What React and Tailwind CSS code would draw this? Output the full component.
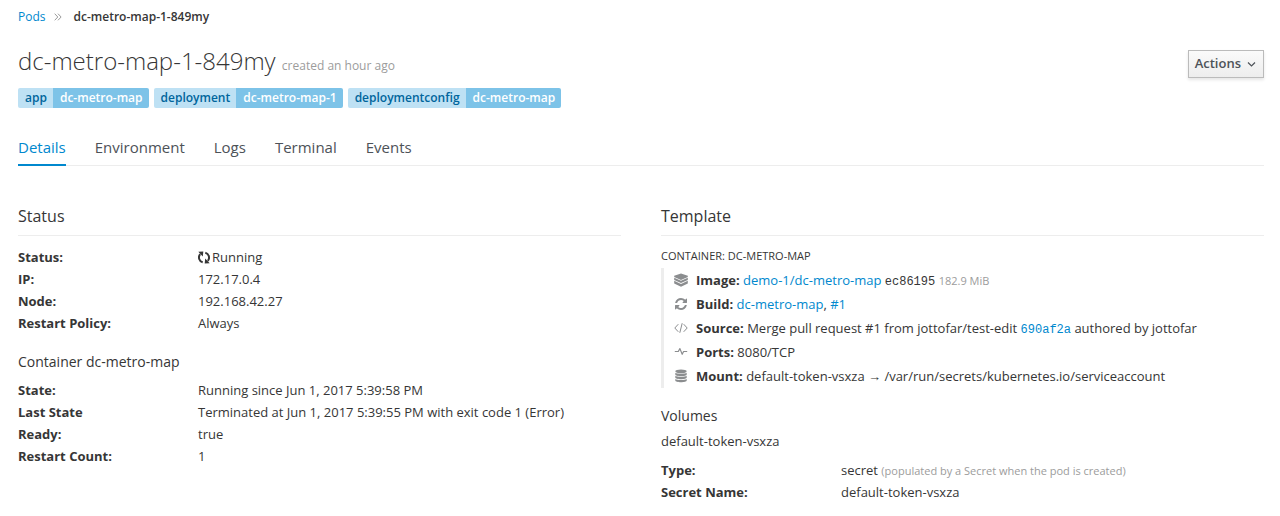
import React from "react";

const link = "text-[#0088ce] hover:underline";
const mono = "font-['Liberation_Mono',monospace] text-xs leading-none";
const muted = "text-[11px] leading-none text-[#9c9c9c]";

function LayersIcon() {
  return (
    <svg viewBox="0 0 14 14" className="h-3.5 w-3.5" fill="currentColor" aria-hidden="true">
      <path d="M7 .5 13.800 2.700V4L7 7 .200 4V2.700z" />
      <path d="M.2 4.800 7 7.800l6.800-3v2.200L7 10.100.2 7z" />
      <path d="M.2 7.800 7 10.900l6.800-3.100v2.700L7 13.700.2 10.500z" />
    </svg>
  );
}

function RefreshIcon() {
  return (
    <svg viewBox="0 0 1536 1536" className="h-3 w-3" fill="currentColor" aria-hidden="true">
      <path d="M1511 928q0 5-1 7-64 268-268 434.500T764 1536q-146 0-282.500-55T238 1324l-129 129q-19 19-45 19t-45-19-19-45V960q0-26 19-45t45-19h448q26 0 45 19t19 45-19 45l-137 137q71 66 161 102t187 36q134 0 250-65t186-179q11-17 53-117 8-23 30-23h192q13 0 22.500 9.500t9.500 22.500zm25-800v448q0 26-19 45t-45 19h-448q-26 0-45-19t-19-45 19-45l138-138Q969 256 768 256q-134 0-250 65T332 500q-11 17-53 117-8 23-30 23H50q-13 0-22.500-9.500T18 608v-7q65-268 270-434.500T768 0q146 0 284 55.500T1297 212l130-129q19-19 45-19t45 19 19 45z" />
    </svg>
  );
}

function CodeIcon() {
  return (
    <svg viewBox="0 0 14 12" className="h-3 w-3.5" fill="none" stroke="currentColor" strokeWidth="1" aria-hidden="true">
      <path d="M4.300 2.200.8 6l3.500 3.800M9.700 2.200 13.200 6 9.700 9.800M8.200 1.200 5.800 10.800" />
    </svg>
  );
}

function PulseIcon() {
  return (
    <svg viewBox="0 0 14 12" className="h-3 w-3.5" fill="none" stroke="currentColor" strokeWidth="1.200" strokeLinejoin="round" aria-hidden="true">
      <path d="M.8 5.500h3.500L5.900 2.600 8.200 8.300 9.600 5.500H13.200" />
    </svg>
  );
}

function DatabaseIcon() {
  return (
    <svg viewBox="0 0 12 14" className="h-3.5 w-3" fill="currentColor" aria-hidden="true">
      <ellipse cx="6" cy="2.300" rx="5.700" ry="1.900" />
      <path d="M.3 3.700c1.800 1.500 9.600 1.500 11.400 0v1.700c0 2.300-11.400 2.300-11.400 0z" />
      <path d="M.3 6.800c1.800 1.500 9.600 1.500 11.400 0v1.700c0 2.300-11.400 2.300-11.400 0z" />
      <path d="M.3 9.900c1.800 1.500 9.600 1.500 11.400 0v1.700c0 2.300-11.400 2.300-11.400 0z" />
    </svg>
  );
}

function RunningIcon() {
  return (
    <svg viewBox="0 0 12 13" className="h-[13px] w-3" aria-hidden="true">
      <path d="M4.700 11.300A5 5 0 0 1 2.200 3.200M7.300 1.700A5 5 0 0 1 9.800 9.800" fill="none" stroke="currentColor" strokeWidth="2" />
      <path d="M.3.800 5.300.500 4.800 5.500zM11.700 12.200 6.700 12.500 7.200 7.500z" fill="currentColor" />
    </svg>
  );
}

function Label({ name, value }) {
  return (
    <li className="flex h-5 overflow-hidden rounded-xs text-xs leading-5 font-semibold">
      <span className="bg-[#bee1f4] pr-1.5 pl-[7px] text-[#00659c]">{name}</span>
      <a href="#label" className="bg-[#7dc3e8] pr-1.5 pl-[7px] text-white">{value}</a>
    </li>
  );
}

function Facts({ items }) {
  return (
    <dl className="grid grid-cols-[180px_1fr] leading-[22px]">
      {items.map(([term, value]) => (
        <React.Fragment key={term}>
          <dt className="font-bold">{term}</dt>
          <dd>{value}</dd>
        </React.Fragment>
      ))}
    </dl>
  );
}

function Row({ icon, name, children }) {
  return (
    <li className="flex">
      <span className="flex w-8 shrink-0 items-center pl-2.5 text-[#8b8d8f]">
        <span className="flex w-3.5 justify-center">{icon}</span>
      </span>
      <span className="min-w-0">
        <b>{name}:</b> {children}
      </span>
    </li>
  );
}

function Heading({ children }) {
  return <h2 className="mb-2.5 border-b border-[#ededed] pb-[7px] text-base leading-6">{children}</h2>;
}

const tabs = ["Details", "Environment", "Logs", "Terminal", "Events"];

export default function App() {
  return (
    <div className="bg-white pt-2 pr-4 pb-3 pl-[18px] font-['Open_Sans',sans-serif] text-[13px] text-[#363636]">
      <nav aria-label="Breadcrumb">
        <ol className="flex items-center text-xs leading-[18px]">
          <li><a href="#pods" className={link}>Pods</a></li>
          <li className="flex items-center">
            <svg viewBox="0 0 8 8" className="mr-3 ml-2 h-2 w-2" fill="none" stroke="#9c9c9c" aria-hidden="true">
              <path d="M.7.700 3.800 4 .7 7.300M4 .700 7.100 4 4 7.300" />
            </svg>
            <strong className="font-semibold">dc-metro-map-1-849my</strong>
          </li>
        </ol>
      </nav>

      <header className="mt-[19px] flex items-start justify-between">
        <h1 className="text-2xl leading-8 font-light">
          dc-metro-map-1-849my <small className="text-xs font-normal text-[#9c9c9c]">created an hour ago</small>
        </h1>
        <button type="button" className="mt-[5px] flex h-7 items-center gap-1.5 border border-[#bbb] bg-linear-to-b from-[#fafafa] to-[#ededed] px-1.5 text-[13px] font-semibold text-[#4d5258] shadow-[0_2px_3px_rgba(3,3,3,0.1)]">
          Actions
          <svg viewBox="0 0 9 8" className="mr-px h-2 w-[9px]" fill="none" stroke="currentColor" strokeWidth="1.200" aria-hidden="true">
            <path d="M1 2.500 4.500 6 8 2.500" />
          </svg>
        </button>
      </header>

      <ul className="mt-2.5 flex flex-wrap gap-[5px]">
        <Label name="app" value="dc-metro-map" />
        <Label name="deployment" value="dc-metro-map-1" />
        <Label name="deploymentconfig" value="dc-metro-map" />
      </ul>

      <nav aria-label="Sections" className="mt-6 border-b border-[#ededed]">
        <ul className="flex gap-[29px] text-[15px] leading-[30px]">
          {tabs.map((tab, i) => (
            <li key={tab} className="-mb-px">
              <a
                href={"#" + tab.toLowerCase()}
                aria-current={i === 0 ? "page" : undefined}
                className={i === 0 ? "block border-b-2 border-[#0088ce] pb-0.5 text-[#0088ce]" : "block border-b-2 border-transparent pb-0.5 text-[#4d5258]"}
              >
                {tab}
              </a>
            </li>
          ))}
        </ul>
      </nav>

      <main className="mt-[38px] grid gap-10 md:grid-cols-2">
        <section>
          <Heading>Status</Heading>
          <Facts
            items={[
              ["Status:", <span className="flex items-center gap-0.5"><RunningIcon />Running</span>],
              ["IP:", "172.17.0.4"],
              ["Node:", "192.168.42.27"],
              ["Restart Policy:", "Always"],
            ]}
          />
          <h3 className="mt-[18px] mb-[7px] text-sm leading-5">Container dc-metro-map</h3>
          <Facts
            items={[
              ["State:", "Running since Jun 1, 2017 5:39:58 PM"],
              ["Last State", "Terminated at Jun 1, 2017 5:39:55 PM with exit code 1 (Error)"],
              ["Ready:", "true"],
              ["Restart Count:", "1"],
            ]}
          />
        </section>

        <section>
          <Heading>Template</Heading>
          <h3 className="mb-0.5 text-[11px] leading-5 uppercase">Container: dc-metro-map</h3>
          <ul className="border-l-3 border-[#ededed] leading-6">
            <Row icon={<LayersIcon />} name="Image">
              <a href="#image" className={link}>demo-1/dc-metro-map</a>{" "}
              <code className={mono}>ec86195</code>{" "}
              <small className={muted}>182.9 MiB</small>
            </Row>
            <Row icon={<RefreshIcon />} name="Build">
              <a href="#build" className={link}>dc-metro-map</a>, <a href="#build-1" className={link}>#1</a>
            </Row>
            <Row icon={<CodeIcon />} name="Source">
              Merge pull request #1 from jottofar/test-edit{" "}
              <a href="#commit" className={link}><code className={mono}>690af2a</code></a> authored by jottofar
            </Row>
            <Row icon={<PulseIcon />} name="Ports">8080/TCP</Row>
            <Row icon={<DatabaseIcon />} name="Mount">default-token-vsxza → /var/run/secrets/kubernetes.io/serviceaccount</Row>
          </ul>
          <h3 className="mt-[18px] mb-1 text-sm leading-5">Volumes</h3>
          <h4 className="mb-[7px] leading-[22px]">default-token-vsxza</h4>
          <Facts
            items={[
              ["Type:", <>secret <small className={muted}>(populated by a Secret when the pod is created)</small></>],
              ["Secret Name:", "default-token-vsxza"],
            ]}
          />
        </section>
      </main>
    </div>
  );
}
